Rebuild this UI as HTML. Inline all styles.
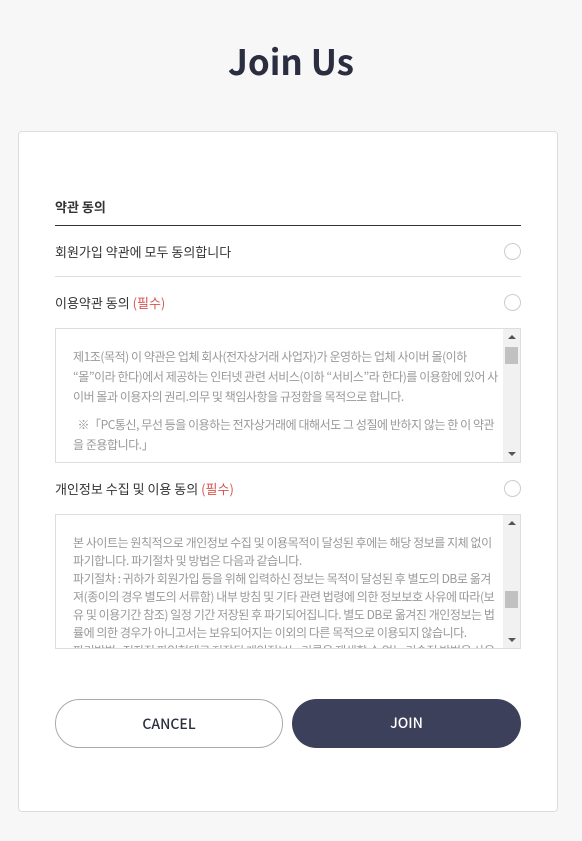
<!DOCTYPE html>
<html><head><meta charset="utf-8"><style>
*{box-sizing:border-box;margin:0;padding:0}
body{width:582px;height:841px;background:#f7f7f7;font-family:"Noto Sans CJK KR","Liberation Sans",sans-serif;position:relative;overflow:hidden}
h1{position:absolute;top:36px;left:0;width:582px;text-align:center;font-size:35px;line-height:50px;font-weight:bold;color:#2b2d40}
.card{position:absolute;left:18px;top:131px;width:540px;height:681px;background:#fff;border:1px solid #ddd;border-radius:4px}
.abs{position:absolute}
.lbl{font-size:13px;color:#333;left:55px;line-height:18px}
.line{left:55px;width:466px;height:1px;background:#ddd}
.circ{left:504px;width:17px;height:17px;border:1px solid #ccc;border-radius:50%}
.req{color:#d9534f}
.box{left:55px;width:466px;border:1px solid #ddd;overflow:hidden;background:#fff}
.txt{position:absolute;left:17px;right:20px;font-size:12px;color:#999;letter-spacing:-0.45px}
.sb{position:absolute;right:0;top:0;bottom:0;width:17px;background:#f1f1f1}
.thumb{position:absolute;left:2px;width:13px;background:#c1c1c1}
.up,.dn{position:absolute;left:5px;width:0;height:0;border-left:4px solid transparent;border-right:4px solid transparent}
.up{top:6px;border-bottom:4px solid #555}
.dn{bottom:6px;border-top:4px solid #555}
.btn{top:699px;height:49px;border-radius:25px;text-align:center;line-height:49px;font-size:14px;font-weight:500}
</style></head><body>
<h1>Join Us</h1>
<div class="card"></div>
<div class="abs lbl" style="top:198px;font-weight:bold;font-size:13px">약관 동의</div>
<div class="abs line" style="top:225px;background:#333"></div>
<div class="abs lbl" style="top:243px">회원가입 약관에 모두 동의합니다</div>
<div class="abs circ" style="top:243px"></div>
<div class="abs line" style="top:276px"></div>
<div class="abs lbl" style="top:294px">이용약관 동의 <span class="req">(필수)</span></div>
<div class="abs circ" style="top:294px"></div>
<div class="abs box" style="top:328px;height:135px">
<div class="txt" style="top:18px;line-height:20px">제1조(목적) 이 약관은 업체 회사(전자상거래 사업자)가 운영하는 업체 사이버 몰(이하 “몰”이라 한다)에서 제공하는 인터넷 관련 서비스(이하 “서비스”라 한다)를 이용함에 있어 사이버 몰과 이용자의 권리.의무 및 책임사항을 규정함을 목적으로 합니다.<br><span style="display:block;height:8px"></span>&nbsp;&nbsp;※「PC통신, 무선 등을 이용하는 전자상거래에 대해서도 그 성질에 반하지 않는 한 이 약관을 준용합니다.」</div>
<div class="sb"><div class="up"></div><div class="thumb" style="top:18px;height:17px"></div><div class="dn"></div></div>
</div>
<div class="abs lbl" style="top:480px">개인정보 수집 및 이용 동의 <span class="req">(필수)</span></div>
<div class="abs circ" style="top:480px"></div>
<div class="abs box" style="top:514px;height:135px">
<div class="txt" style="top:19px;line-height:18px">본 사이트는 원칙적으로 개인정보 수집 및 이용목적이 달성된 후에는 해당 정보를 지체 없이 파기합니다. 파기절차 및 방법은 다음과 같습니다.<br>파기절차 : 귀하가 회원가입 등을 위해 입력하신 정보는 목적이 달성된 후 별도의 DB로 옮겨져(종이의 경우 별도의 서류함) 내부 방침 및 기타 관련 법령에 의한 정보보호 사유에 따라(보유 및 이용기간 참조) 일정 기간 저장된 후 파기되어집니다. 별도 DB로 옮겨진 개인정보는 법률에 의한 경우가 아니고서는 보유되어지는 이외의 다른 목적으로 이용되지 않습니다.<br>파기방법 : 전자적 파일형태로 저장된 개인정보는 기록을 재생할 수 없는 기술적 방법을 사용</div>
<div class="sb"><div class="up"></div><div class="thumb" style="top:76px;height:17px"></div><div class="dn"></div></div>
</div>
<div class="abs btn" style="left:55px;width:228px;border:1px solid #aaa;color:#2b2d40;background:#fff">CANCEL</div>
<div class="abs btn" style="left:292px;width:229px;background:#3d405b;color:#fff">JOIN</div>
</body></html>
